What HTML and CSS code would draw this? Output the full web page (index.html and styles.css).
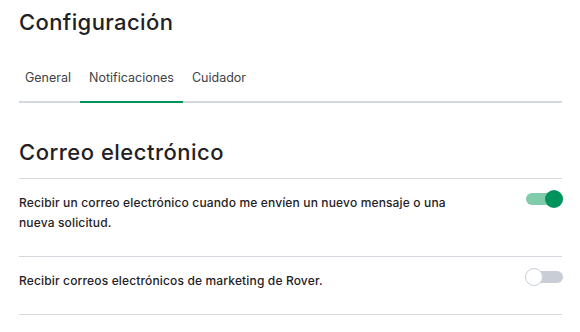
FILE: index.html
```html
<!DOCTYPE html>
<html lang="es">
<head>
  <meta charset="UTF-8" />
  <title>Configuración - Notificaciones</title>
  <meta name="viewport" content="width=device-width, initial-scale=1.0">
  <link rel="stylesheet" href="styles.css">
</head>
<body>
  <h1>Configuración</h1>
  <div class="tabs">
    <div class="tab">General</div>
    <div class="tab active">Notificaciones</div>
    <div class="tab">Cuidador</div>
  </div>
  <h2>Correo electrónico</h2>
  <div class="settings">
    <div class="row">
      <div class="label">Recibir un correo electrónico cuando me envíen un nuevo mensaje o una nueva solicitud.</div>
      <div class="toggle on"><span class="knob"></span></div>
    </div>
    <div class="row">
      <div class="label">Recibir correos electrónicos de marketing de Rover.</div>
      <div class="toggle"><span class="knob"></span></div>
    </div>
  </div>
</body>
</html>
```

FILE: styles.css
```css
body {
  margin: 0;
  padding: 0 18px 0 19px;
  background: #fff;
  color: #1f2124;
  font-family: Inter, 'Noto Sans', sans-serif;
}
h1 {
  margin: 0;
  padding-top: 6px;
  font-size: 22px;
  font-weight: 500;
  line-height: 32px;
  letter-spacing: 0.4px;
}
.tabs {
  display: flex;
  margin-top: 30px;
  border-bottom: 2px solid #d3d9de;
}
.tab {
  padding: 1px 9px 14px;
  font-size: 12.5px;
  line-height: 18px;
  color: #404347;
  margin-bottom: -2px;
  border-bottom: 2px solid transparent;
}
.tab:first-child { padding-left: 6px; }
.tab.active { border-bottom-color: #00935b; }
h2 {
  margin: 33px 0 0;
  font-size: 22px;
  font-weight: 500;
  line-height: 32px;
  letter-spacing: 0.5px;
  padding-bottom: 10px;
  border-bottom: 1px solid #d3d9de;
}
.row {
  display: flex;
  justify-content: space-between;
  align-items: flex-start;
  padding: 11px 0 23px;
  border-bottom: 1px solid #d3d9de;
}
.label {
  max-width: 450px;
  margin-top: 3px;
  font-size: 12px;
  font-weight: 500;
  line-height: 20px;
  letter-spacing: 0.15px;
}
.toggle {
  position: relative;
  width: 37px;
  height: 18px;
  margin-right: -1px;
}
.toggle::before {
  content: '';
  position: absolute;
  left: 0;
  right: 0;
  top: 3px;
  height: 12px;
  border-radius: 6px;
  background: #c9ced6;
}
.toggle.on::before { background: #80ccaa; }
.knob {
  position: absolute;
  top: 0;
  left: -1px;
  width: 16px;
  height: 16px;
  border-radius: 50%;
  background: #fff;
  border: 1px solid #c9ced6;
}
.toggle.on .knob {
  left: auto;
  right: 0;
  width: 18px;
  height: 18px;
  border: 0;
  background: #00935b;
}
```
